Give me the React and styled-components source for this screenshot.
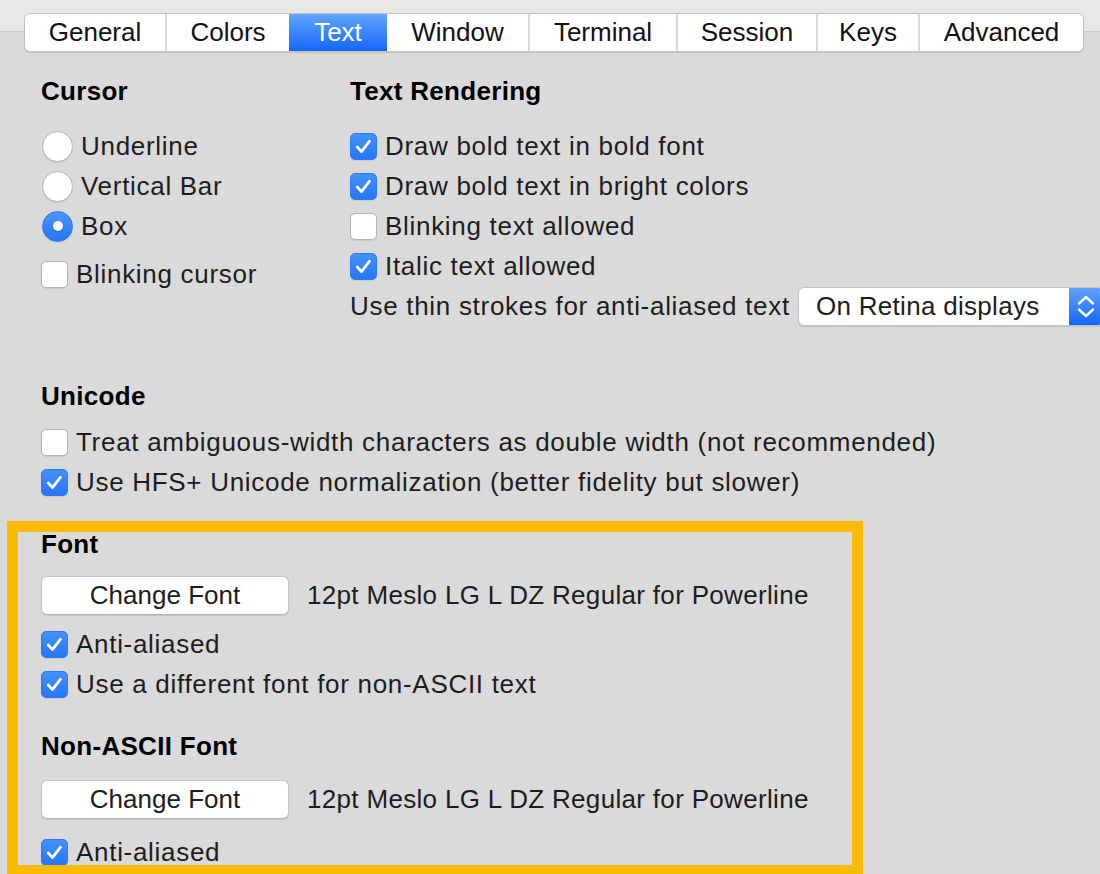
import React from 'react';
import styled, { createGlobalStyle } from 'styled-components';

const GlobalStyle = createGlobalStyle`
  html, body {
    margin: 0;
    padding: 0;
  }
  body {
    background: #dadada;
    font-family: "Liberation Sans", Arial, sans-serif;
    font-size: 26px;
    color: #1d1d1d;
    overflow: hidden;
  }
`;

const Window = styled.div`
    width: 1100px;
    height: 874px;
    overflow: hidden;
    background: #dadada;
`;

const Toolbar = styled.div`
    height: 52px;
    box-sizing: border-box;
    padding: 13px 0 0 24px;
    background: linear-gradient(
        to bottom,
        #e8e8e8 0,
        #e8e8e8 31px,
        #c9c9c9 31px,
        #c9c9c9 32px,
        #dadada 32px
    );
`;

const TabBar = styled.div`
    display: inline-flex;
    height: 39px;
    box-sizing: border-box;
    background: #fff;
    border: 1px solid #c3c3c3;
    border-radius: 6px;
    overflow: hidden;
    box-shadow: 0 1px 1px rgba(0, 0, 0, 0.12);
`;

const Tab = styled.div`
    width: ${p => p.$w}px;
    box-sizing: border-box;
    display: flex;
    align-items: center;
    justify-content: center;
    border-left: ${p => (p.$sep ? '2px solid #d9d9d9' : 'none')};
    color: ${p => (p.$active ? '#fff' : '#111')};
    background: ${p => (p.$active ? 'linear-gradient(to bottom, #62a5fd, #1467fb)' : 'transparent')};
`;

const Content = styled.div`
    padding: 19px 0 0 41px;
`;

const Columns = styled.div`
    display: grid;
    grid-template-columns: 309px auto;
`;

const Column = styled.div`
    display: flex;
    flex-direction: column;
`;

const Heading = styled.div`
    height: 40px;
    line-height: 40px;
    font-weight: bold;
    letter-spacing: 0.3px;
    color: #000;
    margin-top: ${p => p.$before || 0}px;
    margin-bottom: ${p => p.$after || 0}px;
`;

const Row = styled.div`
    display: flex;
    align-items: center;
    height: 40px;
    gap: ${p => (p.$gap === undefined ? 8 : p.$gap)}px;
    margin-top: ${p => p.$before || 0}px;
    white-space: nowrap;
`;

const Label = styled.span`
    line-height: 40px;
    letter-spacing: ${p => (p.$track === undefined ? 0.7 : p.$track)}px;
`;

const RadioCircle = styled.span`
    width: 31px;
    height: 31px;
    margin-left: 1px;
    box-sizing: border-box;
    border-radius: 50%;
    display: flex;
    align-items: center;
    justify-content: center;
    flex-shrink: 0;
    background: ${p => (p.$on ? 'linear-gradient(to bottom, #4b95fb, #2474f5)' : '#fff')};
    border: 1px solid ${p => (p.$on ? '#2a78f2' : '#b5b5b5')};
    box-shadow: 0 1px 1px rgba(0, 0, 0, 0.08);
    &::after {
        content: '';
        display: ${p => (p.$on ? 'block' : 'none')};
        width: 10px;
        height: 10px;
        border-radius: 50%;
        background: #fff;
        box-shadow: 0 1px 1px rgba(0, 0, 0, 0.2);
    }
`;

const Box = styled.span`
    width: 27px;
    height: 27px;
    box-sizing: border-box;
    border-radius: 5px;
    flex-shrink: 0;
    display: flex;
    background: ${p => (p.$on ? 'linear-gradient(to bottom, #4691fa, #2675f5)' : '#fff')};
    border: 1px solid ${p => (p.$on ? '#2c79f3' : '#b3b3b3')};
    box-shadow: 0 1px 1px rgba(0, 0, 0, 0.08);
    svg {
        width: 100%;
        height: 100%;
    }
`;

const Popup = styled.div`
    display: flex;
    align-items: stretch;
    width: 306px;
    height: 39px;
    flex-shrink: 0;
    box-sizing: border-box;
    background: #fff;
    border: 1px solid #c3c3c3;
    border-radius: 6px;
    box-shadow: 0 1px 1px rgba(0, 0, 0, 0.12);
    overflow: hidden;
`;

const PopupValue = styled.span`
    flex: 1;
    padding-left: 17px;
    line-height: 37px;
    letter-spacing: 0.3px;
`;

const Stepper = styled.span`
    width: 34px;
    display: flex;
    background: linear-gradient(to bottom, #5fa2fd, #1467fb);
    svg {
        width: 34px;
        height: 37px;
    }
`;

const Button = styled.div`
    width: 248px;
    height: 39px;
    box-sizing: border-box;
    display: flex;
    align-items: center;
    justify-content: center;
    flex-shrink: 0;
    background: #fff;
    border: 1px solid #c4c4c4;
    border-bottom-color: #b4b4b4;
    border-radius: 6px;
    box-shadow: 0 1px 1px rgba(0, 0, 0, 0.1);
    color: #1d1d1d;
`;

const Highlight = styled.div`
    position: relative;
    margin-top: ${p => p.$before || 0}px;
    &::before {
        content: '';
        position: absolute;
        left: -34px;
        top: -3px;
        width: 856px;
        height: 355px;
        box-sizing: border-box;
        border: 11.5px solid #fcba03;
        pointer-events: none;
    }
`;

const tabs = [
    { label: 'General', w: 140 },
    { label: 'Colors', w: 124 },
    { label: 'Text', w: 98 },
    { label: 'Window', w: 141 },
    { label: 'Terminal', w: 148 },
    { label: 'Session', w: 140 },
    { label: 'Keys', w: 102 },
    { label: 'Advanced', w: 165 },
];
const activeTab = 2;

function Radio({ on, children }) {
    return (
        <Row $gap={8}>
            <RadioCircle $on={on} />
            <Label>{children}</Label>
        </Row>
    );
}

function Check({ on, before, children }) {
    return (
        <Row $before={before}>
            <Box $on={on}>
                {on && (
                    <svg viewBox='0 0 27 27'>
                        <path
                            d='M6.8 14 L11.3 19 L20 7.8'
                            fill='none'
                            stroke='#fff'
                            strokeWidth='3'
                            strokeLinecap='round'
                            strokeLinejoin='round'
                        />
                    </svg>
                )}
            </Box>
            <Label>{children}</Label>
        </Row>
    );
}

function FontPicker({ name }) {
    return (
        <Row $gap={18}>
            <Button>Change Font</Button>
            <Label $track={0.32}>{name}</Label>
        </Row>
    );
}

export default function App() {
    const fontName = '12pt Meslo LG L DZ Regular for Powerline';
    return (
        <Window>
            <GlobalStyle />
            <Toolbar>
                <TabBar>
                    {tabs.map((t, i) => (
                        <Tab
                            key={t.label}
                            $w={t.w}
                            $active={i === activeTab}
                            $sep={i > 0 && i !== activeTab && i !== activeTab + 1}
                        >
                            {t.label}
                        </Tab>
                    ))}
                </TabBar>
            </Toolbar>
            <Content>
                <Columns>
                    <Column>
                        <Heading $after={15}>Cursor</Heading>
                        <Radio>Underline</Radio>
                        <Radio>Vertical Bar</Radio>
                        <Radio on>Box</Radio>
                        <Check before={8}>Blinking cursor</Check>
                    </Column>
                    <Column>
                        <Heading $after={15}>Text Rendering</Heading>
                        <Check on>Draw bold text in bold font</Check>
                        <Check on>Draw bold text in bright colors</Check>
                        <Check>Blinking text allowed</Check>
                        <Check on>Italic text allowed</Check>
                        <Row>
                            <Label>Use thin strokes for anti-aliased text</Label>
                            <Popup>
                                <PopupValue>On Retina displays</PopupValue>
                                <Stepper>
                                    <svg viewBox='0 0 34 37'>
                                        <path
                                            d='M10 15.5 L17 9 L24 15.5 M10 21.5 L17 28 L24 21.5'
                                            fill='none'
                                            stroke='#fff'
                                            strokeWidth='2.4'
                                            strokeLinecap='round'
                                            strokeLinejoin='round'
                                        />
                                    </svg>
                                </Stepper>
                            </Popup>
                        </Row>
                    </Column>
                </Columns>

                <Heading $before={50} $after={6}>Unicode</Heading>
                <Check>Treat ambiguous-width characters as double width (not recommended)</Check>
                <Check on>Use HFS+ Unicode normalization (better fidelity but slower)</Check>

                <Highlight $before={22}>
                    <Heading $after={11}>Font</Heading>
                    <FontPicker name={fontName} />
                    <Check on before={9}>Anti-aliased</Check>
                    <Check on>Use a different font for non-ASCII text</Check>

                    <Heading $before={22} $after={13}>Non-ASCII Font</Heading>
                    <FontPicker name={fontName} />
                    <Check on before={13}>Anti-aliased</Check>
                </Highlight>
            </Content>
        </Window>
    );
}
